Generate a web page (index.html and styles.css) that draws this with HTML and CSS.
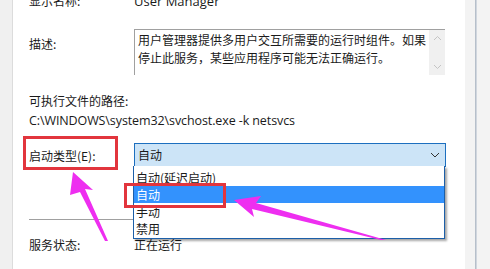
FILE: index.html
```html
<!DOCTYPE html>
<html lang="zh-CN">
<head>
<meta charset="utf-8">
<link rel="stylesheet" href="styles.css">
</head>
<body>
<div class="window">
  <div class="edge-left"></div>
  <div class="panel">
    <div class="row row-name">
      <span class="label">显示名称:</span>
      <span class="value">User Manager</span>
    </div>
    <div class="row row-desc">
      <span class="label">描述:</span>
      <div class="descbox">
        <div class="desctext">用户管理器提供多用户交互所需要的运行时组件。如果停止此服务，某些应用程序可能无法正确运行。</div>
        <div class="scroll">
          <svg width="9" height="6" viewBox="0 0 9 6"><path d="M1 5 L4.5 1.5 L8 5" fill="none" stroke="#c4c4c4" stroke-width="1"/></svg>
          <svg width="9" height="6" viewBox="0 0 9 6"><path d="M1 1 L4.5 4.5 L8 1" fill="none" stroke="#c4c4c4" stroke-width="1"/></svg>
        </div>
      </div>
    </div>
    <div class="path-label">可执行文件的路径:</div>
    <div class="path-value">C:\WINDOWS\system32\svchost.exe -k netsvcs</div>
    <div class="row row-start">
      <span class="label">启动类型(E):</span>
      <div class="combo">
        <span>自动</span>
        <svg width="10" height="6" viewBox="0 0 10 6"><path d="M1 1 L5 5 L9 1" fill="none" stroke="#333" stroke-width="1"/></svg>
      </div>
    </div>
    <div class="sep"></div>
    <div class="row row-status">
      <span class="label">服务状态:</span>
      <span class="value">正在运行</span>
    </div>
    <div class="buttons">
      <div class="btn"></div><div class="btn"></div><div class="btn"></div><div class="btn"></div>
    </div>

    <ul class="dropdown">
      <li>自动(延迟启动)</li>
      <li class="sel">自动</li>
      <li>手动</li>
      <li>禁用</li>
    </ul>
  </div>
  <div class="edge-right"><div class="edge-line"></div></div>

  <div class="mark mark-label"></div>
  <div class="mark mark-item"></div>
  <svg class="arrows" width="490" height="269" viewBox="0 0 490 269">
    <polygon points="73,172 93,190 85,189 108,241 105,241 80,192 70,195" fill="#ee2ef0"/>
    <polygon points="234,200 261,196 256,203 386,240 381,240 252,209 254,217" fill="#ee2ef0"/>
  </svg>
</div>
</body>
</html>
```

FILE: styles.css
```css
* { box-sizing: border-box; }
html, body {
  margin: 0;
  padding: 0;
}
body {
  width: 490px;
  height: 269px;
  overflow: hidden;
  background: #f0f0f0;
  font-family: "Noto Sans CJK SC", "Microsoft YaHei", sans-serif;
  font-size: 12px;
  color: #1a1a1a;
}
.window {
  position: relative;
  display: flex;
  width: 490px;
  height: 269px;
  overflow: hidden;
}
.edge-left {
  width: 13px;
  background: #f0f0f0;
  border-right: 1px solid #dcdcdc;
}
.panel {
  position: relative;
  width: 452px;
  height: 269px;
  overflow: hidden;
  background: #fff;
  padding-left: 16px;
  display: flex;
  flex-direction: column;
}
.edge-right {
  flex: 1;
  background: #f3f3f3;
  padding-left: 10px;
}
.edge-line {
  width: 2px;
  height: 100%;
  background: linear-gradient(to right, #a9b3c0, #dde2e8);
}
.row {
  display: flex;
  align-items: flex-start;
  flex: none;
}
.label {
  width: 105px;
  flex: none;
}
.row-name {
  margin-top: -8px;
  height: 18px;
  line-height: 18px;
}
.row-name .value {
  font-family: "Open Sans", "Noto Sans", sans-serif;
  font-size: 13px;
}
.row-desc {
  margin-top: 19px;
}
.row-desc .label {
  margin-top: 6px;
  line-height: 18px;
}
.descbox {
  display: flex;
  width: 311px;
  height: 46px;
  border-left: 1px solid #a0a0a0;
  border-top: 1px solid #a0a0a0;
}
.desctext {
  flex: 1;
  padding: 1px 3px 0 3px;
  line-height: 18px;
}
.scroll {
  width: 16px;
  background: #f0f0f0;
  display: flex;
  flex-direction: column;
  align-items: center;
  justify-content: space-between;
  padding: 5px 0 5px;
}
.path-label {
  margin-top: 17px;
  line-height: 18px;
  flex: none;
}
.path-value {
  margin-top: 2px;
  line-height: 18px;
  font-family: "Open Sans", "Noto Sans", sans-serif;
  font-size: 12.5px;
  letter-spacing: -0.1px;
  flex: none;
}
.row-start {
  margin-top: 13px;
  height: 24px;
  align-items: center;
}
.combo {
  width: 312px;
  height: 24px;
  background: #cce4f7;
  border: 1px solid #1c6fbf;
  display: flex;
  align-items: center;
  justify-content: space-between;
  padding: 0 5px 0 3px;
}
.combo span { line-height: 18px; }
.sep {
  margin-top: 52px;
  width: 416px;
  height: 1px;
  flex: none;
  background: #a0a0a0;
}
.row-status {
  margin-top: 16px;
  line-height: 18px;
}
.buttons {
  margin-top: 15px;
  display: flex;
  gap: 10px;
  flex: none;
}
.btn {
  width: 96px;
  height: 20px;
  border-top: 2px solid #adadad;
  background: #e8e8e8;
}
.dropdown {
  position: absolute;
  left: 120px;
  top: 166px;
  width: 312px;
  margin: 0;
  padding: 3px 0 1px;
  list-style: none;
  background: #fff;
  border: 1px solid #1c5fa8;
  border-top: none;
  box-shadow: 2px 2px 2px rgba(0,0,0,0.35);
}
.dropdown li {
  height: 17px;
  line-height: 17px;
  padding-left: 2px;
}
.dropdown li.sel {
  background: #3392fd;
  color: #fff;
}
.mark {
  position: absolute;
  border: 3px solid #e2353d;
}
.mark-label {
  left: 23px;
  top: 136px;
  width: 95px;
  height: 34px;
}
.mark-item {
  left: 124px;
  top: 183px;
  width: 102px;
  height: 25px;
}
.arrows {
  position: absolute;
  left: 0;
  top: 0;
  pointer-events: none;
}
```
